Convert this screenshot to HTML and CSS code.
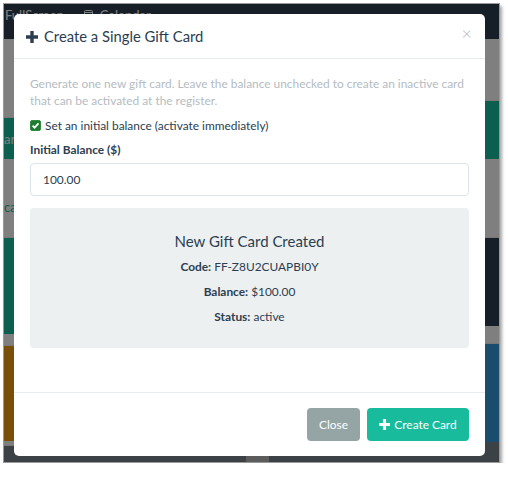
FILE: index.html
```html
<!DOCTYPE html>
<html lang="en">
<head>
<meta charset="utf-8">
<title>Create a Single Gift Card</title>
<link rel="stylesheet" href="styles.css">
</head>
<body>
<div class="shot">
  <div class="app">
    <nav class="topbar">
      <span class="nav-item">FullScreen</span>
      <span class="nav-item nav-cal">
        <svg width="9" height="11" viewBox="0 0 9 11"><rect x="0.5" y="1.5" width="8" height="9" rx="1" fill="none" stroke="currentColor"/><line x1="0.5" y1="3.5" x2="8.5" y2="3.5" stroke="currentColor"/></svg>
        Calendar
      </span>
    </nav>
    <div class="cols">
      <div class="col">
        <div class="blk grey l1"></div>
        <div class="blk green l2"><span class="cut">ard</span></div>
        <div class="blk grey l3"><span class="cut cut-dark">cat</span></div>
        <div class="blk green l4"></div>
        <div class="blk grey l5"></div>
        <div class="blk orange l6"></div>
        <div class="blk grey l7"></div>
        <div class="blk dark l8"></div>
      </div>
      <div class="col">
        <div class="blk grey r1"></div>
        <div class="blk green r2"></div>
        <div class="blk grey r3"></div>
        <div class="blk navy r4"></div>
        <div class="blk grey r5"></div>
        <div class="blk blue r6"></div>
        <div class="blk dark r7"></div>
      </div>
    </div>
  </div>
  <div class="backdrop"></div>

  <div class="modal">
    <div class="modal-header">
      <svg class="title-icon" width="12" height="12" viewBox="0 0 12 12"><path d="M4.3 0h3.4v4.3H12v3.4H7.7V12H4.3V7.7H0V4.3h4.3z" fill="#2c3e50"/></svg>
      <h5 class="modal-title">Create a Single Gift Card</h5>
      <span class="close">×</span>
    </div>
    <div class="modal-body">
      <p class="desc">Generate one new gift card. Leave the balance unchecked to create an inactive card that can be activated at the register.</p>
      <div class="check-row">
        <span class="checkbox"><svg width="9" height="9" viewBox="0 0 9 9"><path d="M1.6 4.6l2 2 3.9-4.3" fill="none" stroke="#fff" stroke-width="1.8"/></svg></span>
        <span class="check-label">Set an initial balance (activate immediately)</span>
      </div>
      <div class="field-label">Initial Balance ($)</div>
      <div class="input">100.00</div>
      <div class="summary">
        <h5 class="summary-title">New Gift Card Created</h5>
        <p class="summary-line"><b>Code:</b> FF-Z8U2CUAPBI0Y</p>
        <p class="summary-line"><b>Balance:</b> $100.00</p>
        <p class="summary-line"><b>Status:</b> active</p>
      </div>
    </div>
    <div class="modal-footer">
      <span class="btn btn-secondary">Close</span>
      <span class="btn btn-success"><svg width="11" height="11" viewBox="0 0 12 12"><path d="M4.3 0h3.4v4.3H12v3.4H7.7V12H4.3V7.7H0V4.3h4.3z" fill="#fff"/></svg>Create Card</span>
    </div>
  </div>
</div>
</body>
</html>
```

FILE: styles.css
```css
* { box-sizing: border-box; }

html, body {
  margin: 0;
  padding: 0;
  background: #ffffff;
  font-family: Lato, "Open Sans", "Liberation Sans", sans-serif;
  color: #2c3e50;
}

body { padding: 3px 0 0 3px; }

.shot {
  position: relative;
  width: 497px;
  height: 460px;
  overflow: hidden;
  border: 1px solid #9a9a9a;
  box-shadow: 2px 3px 3px rgba(0, 0, 0, 0.35);
}

.app {
  width: 100%;
  height: 100%;
  display: flex;
  flex-direction: column;
  background: #ffffff;
}

.topbar {
  height: 35px;
  flex: none;
  background: #2c3e50;
  display: flex;
  gap: 20px;
  padding: 4px 0 0 1px;
  font-size: 13px;
  color: #ffffff;
}

.nav-item { display: inline-flex; align-items: flex-start; gap: 7px; line-height: 15px; }
.nav-cal svg { margin-top: 1px; }

.cols {
  flex: 1;
  display: grid;
  grid-template-columns: 242px 232px;
  column-gap: 23px;
  background: #b8b8b8;
}

.col { display: flex; flex-direction: column; }

.blk { flex: none; overflow: hidden; }
.grey { background: #ffffff; border-bottom: 1px solid #f0f0f0; }
.green { background: #18bc9c; }
.orange { background: #f39c12; }
.navy { background: #2c3e50; }
.blue { background: #3498db; }
.dark { background: #76828a; flex: 1; }

.l1 { height: 79px; }
.l2 { height: 41px; }
.l3 { height: 79px; }
.l4 { height: 96px; }
.l5 { height: 12px; }
.l6 { height: 95px; }
.l7 { height: 5px; }

.r1 { height: 62px; }
.r2 { height: 58px; }
.r3 { height: 79px; }
.r4 { height: 88px; }
.r5 { height: 18px; }
.r6 { height: 98px; }

.cut {
  display: block;
  margin-left: 0;
  margin-top: 14px;
  font-size: 13px;
  line-height: 15px;
  color: #ffffff;
}
.cut-dark { color: #18bc9c; margin-top: 41px; }

.backdrop {
  position: absolute;
  inset: 0;
  background: rgba(0, 0, 0, 0.5);
}

.modal {
  position: absolute;
  left: 10px;
  top: 10px;
  width: 471px;
  height: 442px;
  background: #ffffff;
  border-radius: 5px;
  display: flex;
  flex-direction: column;
}

.modal-header {
  height: 45px;
  flex: none;
  border-bottom: 1px solid #e9ecef;
  display: flex;
  align-items: center;
  padding: 0 13px 0 12px;
}

.title-icon { flex: none; margin-top: 1px; }

.modal-title {
  margin: 0 0 0 6px;
  font-size: 14.8px;
  font-weight: 400;
  line-height: 20px;
  flex: 1;
}

.close {
  align-self: flex-start;
  margin-top: 9px;
  font-size: 18px;
  line-height: 20px;
  color: #b4bcc2;
  font-weight: 300;
}

.modal-body {
  flex: 1;
  padding: 16px 16px 0 16px;
}

.desc {
  margin: 0;
  font-size: 11.9px;
  line-height: 17px;
  color: #b4bcc2;
}

.check-row {
  margin-top: 8px;
  height: 17px;
  display: flex;
  align-items: center;
  gap: 4px;
  font-size: 11.9px;
}

.checkbox {
  width: 11px;
  height: 11px;
  border-radius: 2px;
  background: #1e7b31;
  border: 1px solid #2f8c41;
  display: flex;
  align-items: center;
  justify-content: center;
}

.field-label {
  margin-top: 7px;
  font-size: 11.9px;
  font-weight: 700;
  line-height: 17px;
}

.input {
  margin-top: 5px;
  height: 33px;
  border: 1px solid #dce4ec;
  border-radius: 4px;
  padding: 0 12px;
  display: flex;
  align-items: center;
  font-size: 11.9px;
}

.summary {
  margin-top: 12px;
  height: 140px;
  background: #ecf0f1;
  border-radius: 4px;
  padding-top: 23px;
  text-align: center;
}

.summary-title {
  margin: 0 0 6px 0;
  font-size: 15px;
  font-weight: 400;
  line-height: 20px;
}

.summary-line {
  margin: 0 0 6px 0;
  font-size: 11.9px;
  line-height: 19px;
}

.modal-footer {
  flex: none;
  height: 64px;
  border-top: 1px solid #e9ecef;
  display: flex;
  justify-content: flex-end;
  align-items: center;
  gap: 7px;
  padding: 0 16px;
}

.btn {
  height: 33px;
  border-radius: 4px;
  display: inline-flex;
  align-items: center;
  justify-content: center;
  gap: 4px;
  padding: 0 10px;
  font-size: 11.9px;
  color: #ffffff;
  white-space: nowrap;
}

.btn-secondary { background: #95a5a6; width: 53px; }
.btn-success { background: #18bc9c; width: 102px; }
```
